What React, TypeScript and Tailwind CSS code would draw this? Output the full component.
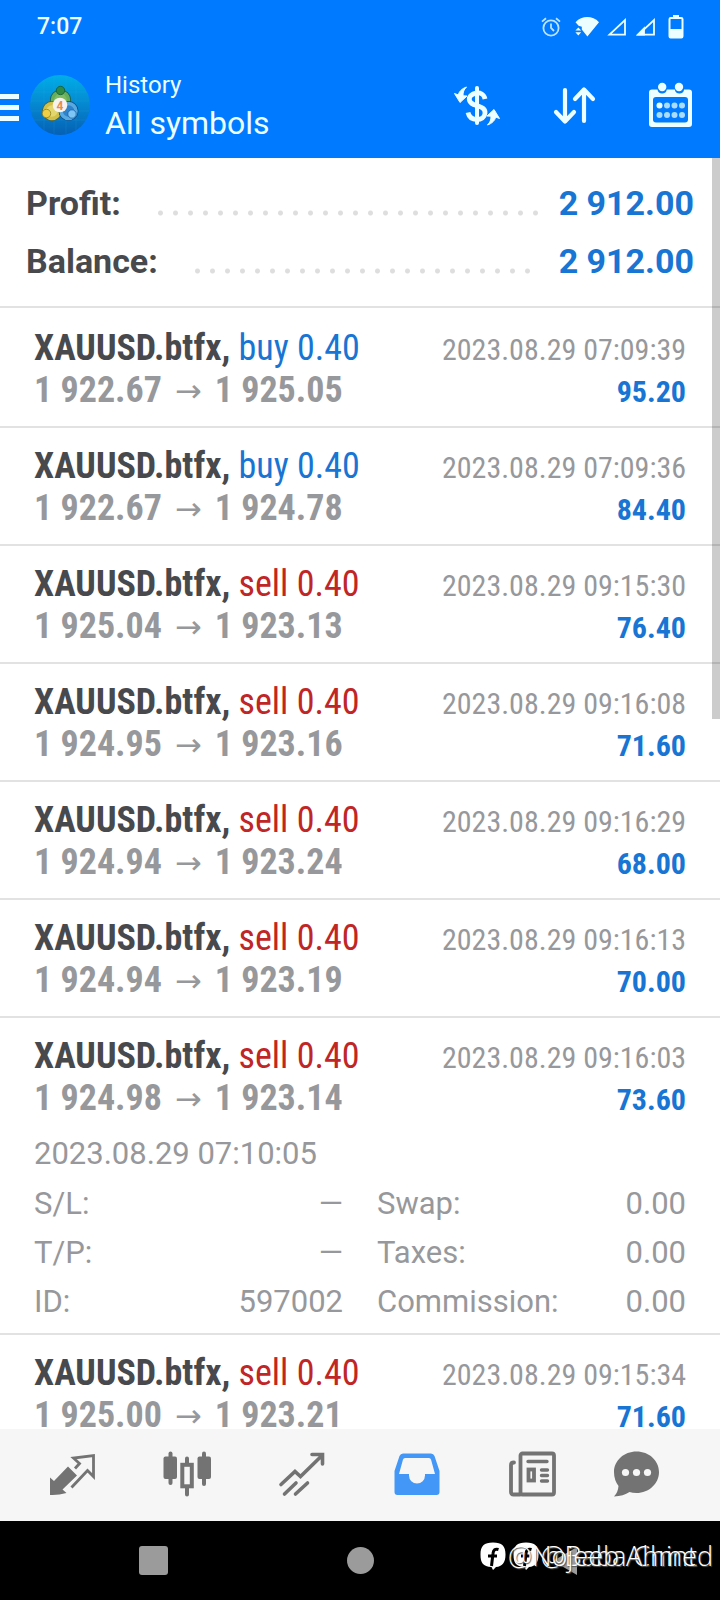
import React from "react";

type Deal = {
  side: "buy" | "sell";
  open: string;
  close: string;
  time: string;
  profit: string;
  details?: boolean;
};

const deals: Deal[] = [
  { side: "buy", open: "1 922.67", close: "1 925.05", time: "2023.08.29 07:09:39", profit: "95.20" },
  { side: "buy", open: "1 922.67", close: "1 924.78", time: "2023.08.29 07:09:36", profit: "84.40" },
  { side: "sell", open: "1 925.04", close: "1 923.13", time: "2023.08.29 09:15:30", profit: "76.40" },
  { side: "sell", open: "1 924.95", close: "1 923.16", time: "2023.08.29 09:16:08", profit: "71.60" },
  { side: "sell", open: "1 924.94", close: "1 923.24", time: "2023.08.29 09:16:29", profit: "68.00" },
  { side: "sell", open: "1 924.94", close: "1 923.19", time: "2023.08.29 09:16:13", profit: "70.00" },
  { side: "sell", open: "1 924.98", close: "1 923.14", time: "2023.08.29 09:16:03", profit: "73.60", details: true },
  { side: "sell", open: "1 925.00", close: "1 923.21", time: "2023.08.29 09:15:34", profit: "71.60" },
];

function StatusBar() {
  return (
    <div className="flex h-[54px] items-center justify-between pl-[37px] pr-[36px]">
      <span className="text-[23px] leading-7 font-medium">7:07</span>
      <div className="flex items-center">
        <svg width="20" height="20" viewBox="0 0 20 20" fill="none" stroke="currentColor" strokeWidth="1.8" className="opacity-80">
          <circle cx="10" cy="11" r="7.6" />
          <path d="M10 6.5V11l3 3M1 4.6 5 1.2M19 4.6 15 1.2" />
        </svg>
        <svg width="24" height="20" viewBox="0 0 24 20" fill="currentColor" className="ml-[14px]">
          <path d="M0.5 5.2C7-1.6 17.5-1.6 24 5.2L12.4 19.4 6.8 12.6V9.8L3.6 8.8Z" />
          <path d="M3.3 10.4 6.2 13.6H.4ZM3.3 18.6.4 15.2h5.8Z" />
        </svg>
        <svg width="20" height="20" viewBox="0 0 20 20" fill="none" stroke="currentColor" strokeWidth="1.8" className="ml-[8px]">
          <path d="M18 3v14.6H2.5Z" />
        </svg>
        <svg width="20" height="20" viewBox="0 0 20 20" fill="none" stroke="currentColor" strokeWidth="1.8" className="ml-[9px]">
          <path d="M18 3v14.6H2.5Z" />
          <path d="M8 11.5v6H2Z" fill="currentColor" />
        </svg>
        <svg width="16" height="24" viewBox="0 0 16 24" className="ml-[12px]">
          <path d="M5 0h6v3h-6Z" fill="currentColor" />
          <rect x="1.5" y="3" width="13" height="19.5" rx="1.2" fill="none" stroke="currentColor" strokeWidth="2" />
          <path d="M1 14h14v9H1Z" fill="currentColor" />
        </svg>
      </div>
    </div>
  );
}

function Avatar() {
  return (
    <svg width="60" height="60" viewBox="0 0 60 60" className="ml-[11px] shrink-0" aria-label="Account">
      <defs>
        <linearGradient id="sky" x1="0" y1="0" x2="0" y2="1">
          <stop offset="0" stopColor="#00aee8" />
          <stop offset="0.5" stopColor="#0587cf" />
          <stop offset="1" stopColor="#0560b4" />
        </linearGradient>
      </defs>
      <circle cx="30" cy="30" r="30" fill="url(#sky)" />
      <path d="M4 17h52M1 26h58M1 36h58M4 45h52M14 5v50M24 1v58M36 1v58M46 5v50" stroke="#3bb3e8" strokeWidth="0.5" opacity="0.3" />
      <circle cx="30.5" cy="25" r="9" fill="#7dbb62" stroke="#1d5a3c" strokeWidth="3" />
      <circle cx="30.5" cy="25" r="8" fill="none" stroke="#66ad5c" strokeWidth="3.5" />
      <circle cx="22" cy="36" r="8.5" fill="#e3d66c" stroke="#5a5f24" strokeWidth="3" />
      <circle cx="22" cy="36" r="7.5" fill="none" stroke="#d0c04a" strokeWidth="3.5" />
      <circle cx="38.5" cy="36" r="8.5" fill="#2f83cc" stroke="#0d4a88" strokeWidth="3" />
      <circle cx="38.5" cy="36" r="7.5" fill="none" stroke="#58a9e0" strokeWidth="3.5" />
      <circle cx="30.5" cy="15.5" r="4.2" fill="#2f8a45" stroke="#175a35" strokeWidth="0.8" />
      <circle cx="16.5" cy="38.5" r="4.2" fill="#f0cf45" stroke="#8a8228" strokeWidth="0.8" />
      <circle cx="42" cy="39" r="4.2" fill="#7cc5f5" stroke="#1a5fa5" strokeWidth="0.8" />
      <circle cx="30" cy="30" r="7.3" fill="#f6f3ee" />
      <text x="30" y="34.5" textAnchor="middle" fontSize="12" fontWeight="700" fill="#e98b4e">4</text>
    </svg>
  );
}

function AppBar() {
  return (
    <div className="flex h-[104px] items-center pb-0.5 pr-[26px]">
      <button aria-label="Menu" className="flex w-[19px] shrink-0 flex-col gap-[6px] pt-1">
        <span className="h-[5px] w-full bg-current" />
        <span className="h-[5px] w-full bg-current" />
        <span className="h-[5px] w-full bg-current" />
      </button>
      <Avatar />
      <div className="ml-[15px] flex-1 pt-1">
        <div className="text-[24px] leading-8">History</div>
        <h1 className="text-[32px] leading-11">All symbols</h1>
      </div>
      <button aria-label="Currency">
        <svg width="46" height="46" viewBox="0 0 46 46" fill="none" stroke="currentColor">
          <path d="M23 6v35" strokeWidth="4" strokeLinecap="round" />
          <path d="M31 17c-1-5-5-6.500-8.500-6-5 .700-8 4-7 7.500 1.200 4 5.500 4.500 8.500 5.500 4.500 1.500 7.500 3 7 7.500-.500 4-4 6-8 6-4.500 0-8-2.500-9-7" strokeWidth="4.800" />
          <path d="M12.500 5C8 6.500 4.500 10 4.500 13l-4-1.500 5.500 9 7-6.500-4-.200c0-4 .800-6 3.500-8.800Z" fill="currentColor" strokeWidth="1" />
          <path d="M33.500 43c4.500-1.500 8-5 8-8l4 1.500-5.500-9-7 6.500 4 .200c0 4-.800 6-3.500 8.800Z" fill="currentColor" strokeWidth="1" />
        </svg>
      </button>
      <button aria-label="Sort" className="ml-[52px]">
        <svg width="44" height="46" viewBox="0 0 44 46" fill="none" stroke="currentColor" strokeWidth="4.200" strokeLinecap="round" strokeLinejoin="round">
          <path d="M13 8v31M4 30l9 9.500 9-9.500M32 39V8M23 17l9-9.500 9 9.500" />
        </svg>
      </button>
      <button aria-label="Pick dates" className="ml-[52px]">
        <svg width="46" height="46" viewBox="0 0 46 46">
          <path fillRule="evenodd" fill="currentColor" d="M4 7.500h5.500a4.700 4.700 0 0 0 9.300 0h8a4.700 4.700 0 0 0 9.300 0H41a3 3 0 0 1 3 3V42a3 3 0 0 1-3 3H4a3 3 0 0 1-3-3V10.500a3 3 0 0 1 3-3ZM8 15a3 3 0 0 0-3 3v19.500a3 3 0 0 0 3 3h29a3 3 0 0 0 3-3V18a3 3 0 0 0-3-3Z" />
          <g fill="currentColor">
            <circle cx="14.200" cy="5" r="4.200" />
            <circle cx="31" cy="5" r="4.200" />
          </g>
          <g fill="#a9dcff">
            <circle cx="11.500" cy="23.500" r="3" fill="currentColor" />
            <circle cx="19" cy="23.500" r="3" />
            <circle cx="26.500" cy="23.500" r="3" />
            <circle cx="34" cy="23.500" r="3" />
            <circle cx="11.500" cy="33" r="3" />
            <circle cx="19" cy="33" r="3" />
            <circle cx="26.500" cy="33" r="3" />
            <circle cx="34" cy="33" r="3" />
          </g>
        </svg>
      </button>
    </div>
  );
}

function SummaryLine({ label, value }: { label: string; value: string }) {
  return (
    <div className="flex h-[58px] items-center text-[34px] leading-10 font-bold">
      <dt className="text-[#48494d]">{label}</dt>
      <div className="mt-[20px] mr-[20px] ml-[32px] h-1.5 flex-1 bg-[radial-gradient(circle,#dedede_2px,transparent_3px)] bg-[length:15px_6px] bg-repeat-x" />
      <dd className="text-[#1875d3]">{value}</dd>
    </div>
  );
}

function Field({ label, value }: { label: string; value: string }) {
  return (
    <div className="flex justify-between">
      <dt>{label}</dt>
      <dd>{value}</dd>
    </div>
  );
}

function DealRow({ deal }: { deal: Deal }) {
  return (
    <li className="border-b-2 border-[#e2e2e2] px-[34px] pt-[17px]">
      <div
        className={
          (deal.details ? "h-[94px]" : "h-[99px]") +
          " flex flex-col font-['Roboto_Condensed','Liberation_Sans_Narrow',Roboto,sans-serif]"
        }
      >
        <div className="flex h-[42px] items-baseline justify-between leading-[42px] whitespace-nowrap">
          <span className="text-[36px]">
            <b className="font-bold text-[#48494d]">XAUUSD.btfx,</b>{" "}
            <span className={deal.side === "buy" ? "text-[#1875d3]" : "text-[#c02626]"}>{deal.side} 0.40</span>
          </span>
          <time className="text-[30px] text-[#97989b]">{deal.time}</time>
        </div>
        <div className="flex h-[42px] items-baseline justify-between leading-[42px] font-bold whitespace-nowrap">
          <span className="flex items-baseline gap-[13px] text-[36px] text-[#97989b]">
            {deal.open}
            <span className="font-['DejaVu_Sans',sans-serif] text-[32px] leading-8 font-normal">→</span>
            {deal.close}
          </span>
          <span className="text-[30px] text-[#1875d3]">{deal.profit}</span>
        </div>
      </div>
      {deal.details && (
        <div className="pb-[7px] text-[31px] leading-[49px] text-[#97989b]">
          <div className="leading-[50px]">2023.08.29 07:10:05</div>
          <div className="grid grid-cols-2 gap-[34px]">
            <dl>
              <Field label="S/L:" value="—" />
              <Field label="T/P:" value="—" />
              <Field label="ID:" value="597002" />
            </dl>
            <dl>
              <Field label="Swap:" value="0.00" />
              <Field label="Taxes:" value="0.00" />
              <Field label="Commission:" value="0.00" />
            </dl>
          </div>
        </div>
      )}
    </li>
  );
}

function TabBar() {
  const tab = "flex flex-[115] items-center justify-center";
  return (
    <nav className="flex h-[92px] shrink-0 bg-[#f6f6f6] pr-[38px] pb-0.5 pl-[14px] text-[#737373]">
      <button aria-label="Quotes" className={tab}>
        <svg width="48" height="48" viewBox="0 0 48 48">
          <path d="M2 45V27.500l4 3.500L20 16.500l9 9L14.500 39.500l4 3.500Q10 45.500 2 45Z" fill="currentColor" />
          <path d="M27 18.500 31.500 13.500 25.500 8 45.500 5.500V26.500l-6-6L23.500 37.500" fill="none" stroke="currentColor" strokeWidth="2.800" strokeLinejoin="miter" />
        </svg>
      </button>
      <button aria-label="Chart" className={tab}>
        <svg width="48" height="48" viewBox="0 0 48 48" fill="currentColor">
          <rect x="0.500" y="6.500" width="13.500" height="22.500" rx="2" />
          <rect x="5.500" y="1.500" width="4" height="33.500" rx="2" />
          <rect x="34.500" y="6.500" width="13.500" height="22.500" rx="2" />
          <rect x="39" y="1.500" width="4" height="34.500" rx="2" />
          <path d="M22 14V8.500a2 2 0 0 1 4 0V14M22 36v8.500a2 2 0 0 0 4 0V36" />
          <rect x="19.300" y="14.800" width="9.500" height="21.500" fill="none" stroke="currentColor" strokeWidth="4" />
        </svg>
      </button>
      <button aria-label="Trade" className={tab}>
        <svg width="48" height="48" viewBox="0 0 48 48" fill="none" stroke="currentColor" strokeWidth="3.600" strokeLinecap="round">
          <path d="M3 34.500 17 21.500l5.500 5L43 6.500M34 4.500h10.500V14M6.500 44 18 33M17.500 44 29.500 33" />
        </svg>
      </button>
      <button aria-label="History" aria-current="page" className={tab}>
        <svg width="48" height="48" viewBox="0 0 48 48">
          <path fillRule="evenodd" fill="#4397f7" d="M10 3.500h28q2.500 0 3.500 2.500l5 15V42q0 3-3 3h-39q-3 0-3-3V21L6.500 6Q7.500 3.500 10 3.500Zm2 4.500q-1.500 0-2 1.500L6 24h10v1.500a8 8 0 0 0 16 0V24h10L38 9.500Q37.500 8 36 8Z" />
        </svg>
      </button>
      <button aria-label="News" className={tab}>
        <svg width="48" height="48" viewBox="0 0 48 48" fill="none" stroke="currentColor" strokeWidth="3.800" strokeLinecap="round">
          <rect x="12.500" y="3.500" width="33.500" height="41" rx="2" />
          <path d="M12 44.500H5.500q-2.500 0-2.500-2.500V15q0-2.500 3-2.500" />
          <path d="M20 11.500H39M33.500 20h6M33.500 25.500h6M33.500 31h6" strokeWidth="3.400" />
          <rect x="20.500" y="19.500" width="5.500" height="11" strokeWidth="3.800" />
        </svg>
      </button>
      <button aria-label="Messages" className="flex flex-[92] items-center justify-center">
        <svg width="48" height="48" viewBox="0 0 48 48">
          <path d="M24.500 1.500C37 1.500 47 10.500 47 22S37 43 24.500 43q-4 0-7-1-6 4-15.500 4.500 4-4 4.500-10.500Q2 30 2 22C2 10.500 12 1.500 24.500 1.500Z" fill="currentColor" />
          <circle cx="13.500" cy="22.500" r="3.600" fill="#f6f6f6" />
          <circle cx="24.500" cy="22.500" r="3.600" fill="#f6f6f6" />
          <circle cx="35.500" cy="22.500" r="3.600" fill="#f6f6f6" />
        </svg>
      </button>
    </nav>
  );
}

function FacebookMark() {
  return (
    <svg width="26" height="28" viewBox="0 0 26 28" className="shrink-0">
      <path d="M13 0.500C22 .500 25.500 4 25.500 12.500S22 24.500 16 25l-3 3-1.500-3C3 24.500.500 21 .500 12.500S4 .500 13 .500Z" fill="#fff" />
      <path d="M18.500 7.500q-5-1.500-5.500 4L11.500 24M8 14h9" fill="none" stroke="#000" strokeWidth="3" />
    </svg>
  );
}

function SystemBar() {
  return (
    <footer className="relative grid h-[79px] shrink-0 grid-cols-3 items-center bg-black text-[#9b9b9b]">
      <button aria-label="Recent apps" className="ml-[139px] size-[29px] rounded-[3px] bg-current" />
      <button aria-label="Home" className="size-[27px] justify-self-center rounded-full bg-current" />
      <button aria-label="Back" className="ml-[71px]">
        <svg width="28" height="30" viewBox="0 0 28 30">
          <path d="M26 1v28L2 15Z" fill="currentColor" />
        </svg>
      </button>
      <div className="absolute top-[19px] right-[23px] flex items-center gap-0.5 text-[27px] leading-8 font-light whitespace-nowrap text-white font-['Open_Sans','Noto_Sans',sans-serif] text-shadow-[1px_1px_1px_#555]">
        <FacebookMark />
        <span>@Baba Chint</span>
      </div>
      <div className="absolute top-[19px] right-[7px] flex items-center gap-0.5 text-[27px] leading-8 font-light whitespace-nowrap text-white font-['Open_Sans','Noto_Sans',sans-serif] text-shadow-[1px_1px_1px_#555]">
        <FacebookMark />
        <span>@Nojeeb Ahmed</span>
      </div>
    </footer>
  );
}

export default function App() {
  return (
    <div className="flex h-screen flex-col overflow-hidden bg-white font-[Roboto,sans-serif]">
      <header className="shrink-0 bg-[#007aff] text-[#ecfeff]">
        <StatusBar />
        <AppBar />
      </header>
      <main className="relative min-h-0 flex-1 overflow-hidden">
        <dl className="border-b-2 border-[#e2e2e2] pt-[16px] pr-[26px] pb-[16px] pl-[26px]">
          <SummaryLine label="Profit:" value="2 912.00" />
          <SummaryLine label="Balance:" value="2 912.00" />
        </dl>
        <ul className="pt-0.5">
          {deals.map((deal) => (
            <DealRow key={deal.time} deal={deal} />
          ))}
        </ul>
        <div className="absolute top-0 right-0 h-[561px] w-2 bg-black/20" />
      </main>
      <TabBar />
      <SystemBar />
    </div>
  );
}
